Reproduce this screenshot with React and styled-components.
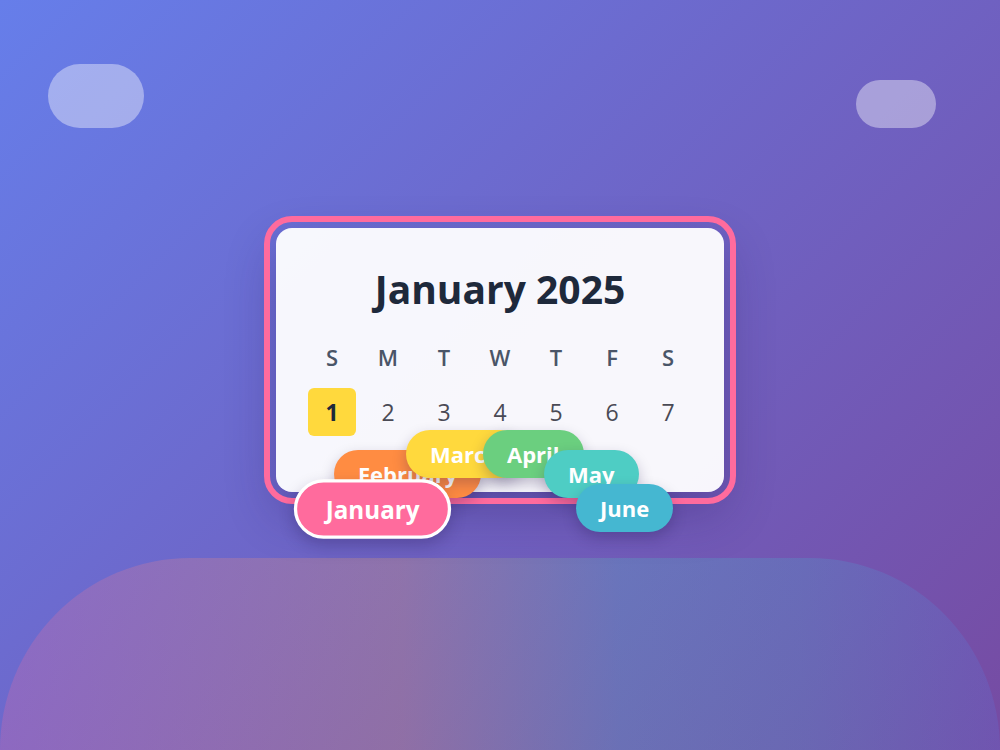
import styled, { createGlobalStyle } from "styled-components";

const GlobalStyle = createGlobalStyle`
  * { box-sizing: border-box; }
  html, body {
    margin: 0;
    padding: 0;
  }
  body {
    font-family: "Open Sans", "Noto Sans", sans-serif;
  }
`;

const weekdays = ["S", "M", "T", "W", "T", "F", "S"];
const days = [1, 2, 3, 4, 5, 6, 7];

const months = [
  { name: "February", color: "#ff8c42", left: 58, top: 222, z: 2 },
  { name: "March", color: "#ffd93d", left: 130, top: 202, z: 3 },
  { name: "April", color: "#6bcf7f", left: 207, top: 202, z: 4 },
  { name: "May", color: "#4ecdc4", left: 268, top: 222, z: 5 },
  { name: "June", color: "#45b7d1", left: 300, top: 256, z: 6 },
];

const App = () => {
  return (
    <>
      <GlobalStyle />
      <Page>
        <Bubble $left={48} $top={64} $w={96} $h={64} />
        <Bubble $left={856} $top={80} $w={80} $h={48} />
        <Hill />
        <CardWrap>
          <Card>
            <Title>January 2025</Title>
            <Grid>
              {weekdays.map((d, i) => (
                <Weekday key={i}>{d}</Weekday>
              ))}
              {days.map((d) => (
                <Day key={d} $today={d === 1}>
                  {d}
                </Day>
              ))}
            </Grid>
          </Card>
          {months.map((m) => (
            <MonthPill
              key={m.name}
              $color={m.color}
              style={{ left: m.left, top: m.top, zIndex: m.z }}
            >
              {m.name}
            </MonthPill>
          ))}
          <ActivePill style={{ left: 25, top: 254, zIndex: 7 }}>
            January
          </ActivePill>
        </CardWrap>
      </Page>
    </>
  );
};

const Page = styled.div`
  position: relative;
  width: 100%;
  height: 750px;
  overflow: hidden;
  background: linear-gradient(135deg, #667eea 0%, #764ba2 100%);
  display: flex;
  justify-content: center;
  padding-top: 228px;
`;

const Bubble = styled.div`
  position: absolute;
  left: ${(p) => p.$left}px;
  top: ${(p) => p.$top}px;
  width: ${(p) => p.$w}px;
  height: ${(p) => p.$h}px;
  border-radius: ${(p) => p.$h / 2}px;
  background: rgba(255, 255, 255, 0.4);
`;

const Hill = styled.div`
  position: absolute;
  left: 0;
  right: 0;
  bottom: 0;
  height: 192px;
  border-radius: 190px 190px 0 0 / 192px 192px 0 0;
  opacity: 0.22;
  background: linear-gradient(
    90deg,
    #ff6b9d 0%,
    #ffb15a 40%,
    #4ecdc4 62%,
    #45b7d1 80%,
    #5a78e0 100%
  );
`;

const CardWrap = styled.div`
  position: relative;
  width: 448px;
  height: 264px;
  z-index: 1;
`;

const Card = styled.div`
  width: 100%;
  height: 100%;
  padding: 34px 32px 0;
  border-radius: 16px;
  background: rgba(255, 255, 255, 0.95);
  outline: 6px solid #ff6b9d;
  outline-offset: 6px;
  box-shadow: 0 20px 50px rgba(40, 20, 90, 0.3);
  display: flex;
  flex-direction: column;
  align-items: center;
`;

const Title = styled.h1`
  margin: 0 0 17px;
  font-size: 39px;
  line-height: 54px;
  font-weight: 700;
  color: #1e293b;
`;

const Grid = styled.div`
  display: grid;
  grid-template-columns: repeat(7, 48px);
  grid-auto-rows: 48px;
  gap: 7px 8px;
`;

const Weekday = styled.div`
  display: flex;
  align-items: center;
  justify-content: center;
  font-size: 22px;
  font-weight: 600;
  color: #4a5568;
`;

const Day = styled.div`
  display: flex;
  align-items: center;
  justify-content: center;
  border-radius: 6px;
  font-size: 23px;
  font-weight: ${(p) => (p.$today ? 700 : 500)};
  color: ${(p) => (p.$today ? "#1e293b" : "#4a4a55")};
  background: ${(p) => (p.$today ? "#ffd93d" : "transparent")};
`;

const MonthPill = styled.div`
  position: absolute;
  height: 48px;
  padding: 0 24px;
  border-radius: 24px;
  display: flex;
  align-items: center;
  justify-content: center;
  white-space: nowrap;
  font-size: 22px;
  font-weight: 700;
  color: #ffffff;
  background: ${(p) => p.$color};
  box-shadow: 0 6px 14px rgba(30, 20, 70, 0.25);
`;

const ActivePill = styled(MonthPill)`
  height: 54px;
  padding: 0 26px;
  border-radius: 27px;
  border: 3px solid #ffffff;
  background: #ff6b9d;
  transform: scale(1.1);
`;

export default App;
